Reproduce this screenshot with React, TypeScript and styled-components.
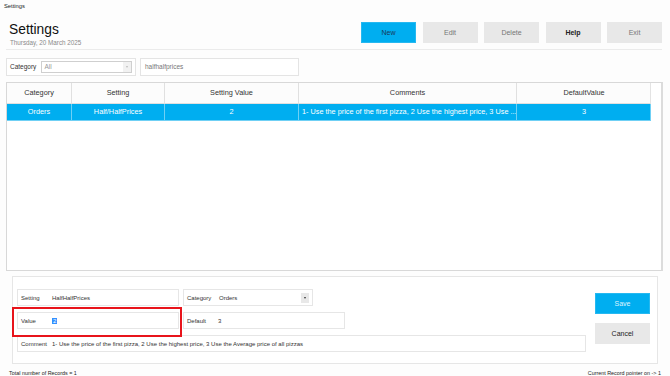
import React from "react";
import styled, { createGlobalStyle } from "styled-components";

const Global = createGlobalStyle`
  html, body { margin: 0; padding: 0; background: #fdfdfd; }
  body { font-family: "Liberation Sans", Arial, sans-serif; color: #333; }
  * { box-sizing: border-box; }
`;

const Page = styled.div`
  width: 670px;
  height: 376px;
  display: flex;
  flex-direction: column;
  background: #fdfdfd;
  overflow: hidden;
`;

const TitleBar = styled.div`
  height: 14px;
  padding: 3px 0 0 4px;
  font-size: 5.8px;
  color: #222;
`;

const Header = styled.div`
  display: flex;
  justify-content: space-between;
  align-items: flex-start;
  margin: 0 8px 0 6px;
  padding: 8px 0 2px 3px;
  border-bottom: 1px solid #ebebeb;
`;

const TitleBlock = styled.div`
  display: flex;
  flex-direction: column;
`;

const Title = styled.div`
  font-size: 13.8px;
  line-height: 16px;
  color: #111;
`;

const DateText = styled.div`
  font-size: 6.3px;
  line-height: 8px;
  color: #8a8a8a;
  margin-top: 1px;
  padding-left: 1px;
`;

const ButtonRow = styled.div`
  display: flex;
  gap: 6.5px;
`;

type Variant = "primary" | "plain" | "strong" | "save" | "cancel";

const isBlue = (v: Variant) => v === "primary" || v === "save";
const btnColor = (v: Variant) =>
  v === "primary" ? "#1a3a5a" : v === "save" ? "#dff4ff" : v === "strong" || v === "cancel" ? "#222" : "#777";

const ActionButton = styled.div<{ $v: Variant }>`
  width: 55px;
  height: 21px;
  display: flex;
  align-items: center;
  justify-content: center;
  font-size: 7px;
  background: ${(p) => (isBlue(p.$v) ? "#00aef0" : "#e8e8e8")};
  border: 1px solid ${(p) => (isBlue(p.$v) ? "#26b8f0" : "#e8e8e8")};
  color: ${(p) => btnColor(p.$v)};
  font-weight: ${(p) => (p.$v === "strong" ? 700 : 400)};
`;

const FilterRow = styled.div`
  display: flex;
  gap: 4px;
  margin: 8px 0 0 6px;
`;

const FilterBox = styled.div<{ $w: number }>`
  width: ${(p) => p.$w}px;
  height: 18px;
  border: 1px solid #e4e4e4;
  background: #fff;
  display: flex;
  align-items: center;
  padding: 0 3px;
  font-size: 6.5px;
  color: #333;
`;

const FilterLabel = styled.span`
  margin-right: 5px;
`;

const SelectBox = styled.div`
  flex: 1;
  height: 12px;
  border: 1px solid #cfcfcf;
  display: flex;
  align-items: center;
  justify-content: space-between;
  padding-left: 2px;
  color: #999;
  background: #fff;
`;

const SelectArrow = styled.div<{ $dark?: boolean }>`
  width: 8px;
  height: 10px;
  background: ${(p) => (p.$dark ? "#e8e8e8" : "#f1f1f1")};
  display: flex;
  align-items: center;
  justify-content: center;
  &::after {
    content: "";
    border-left: 1.5px solid transparent;
    border-right: 1.5px solid transparent;
    border-top: 2px solid ${(p) => (p.$dark ? "#333" : "#bbb")};
  }
`;

const SearchText = styled.span`
  color: #777;
  padding-left: 1px;
`;

const TableFrame = styled.div`
  margin: 6px 7px 0 6px;
  height: 190px;
  border: 1px solid #d8d8d8;
  border-right: 2px solid #dcdcdc;
  background: #fff;
  display: flex;
  flex-direction: column;
  padding: 0 10px 0 0;
`;

const Row = styled.div<{ $head?: boolean }>`
  display: grid;
  grid-template-columns: 64px 93px 134px 218px 135px;
  height: ${(p) => (p.$head ? "21px" : "17px")};
  background: ${(p) => (p.$head ? "#fcfcfc" : "#00aef0")};
  border-bottom: 1px solid ${(p) => (p.$head ? "#e0e0e0" : "#6fd0f5")};
  border-right: 1px solid ${(p) => (p.$head ? "#e3e3e3" : "#6fd0f5")};
`;

const Cell = styled.div<{ $head?: boolean; $left?: boolean; $first?: boolean }>`
  display: flex;
  align-items: center;
  justify-content: ${(p) => (p.$left ? "flex-start" : "center")};
  padding: 0 3px;
  font-size: 7.3px;
  white-space: nowrap;
  overflow: hidden;
  color: ${(p) => (p.$head ? "#333" : "#fff")};
  border-left: ${(p) => (p.$first ? "none" : `1px solid ${p.$head ? "#e0e0e0" : "#6fd0f5"}`)};
`;

const Panel = styled.div`
  position: relative;
  margin: 5px 12px 0 12px;
  height: 88px;
  border: 1px solid #e6e6e6;
  background: #fff;
  display: flex;
  justify-content: space-between;
  padding: 12px 7px 0 4px;
`;

const FormGrid = styled.div`
  display: grid;
  grid-template-columns: 162px 162px 237px;
  grid-template-rows: 17px 17px 17px;
  column-gap: 4px;
  row-gap: 6px;
`;

const Field = styled.div<{ $w?: number; $span?: number }>`
  grid-column: ${(p) => (p.$span ? `span ${p.$span}` : "auto")};
  width: ${(p) => (p.$w ? `${p.$w}px` : "auto")};
  border: 1px solid #e6e6e6;
  display: flex;
  align-items: center;
  padding: 0 3px;
  font-size: 6px;
  color: #333;
  white-space: nowrap;
`;

const FieldLabel = styled.span<{ $w: number }>`
  width: ${(p) => p.$w}px;
  flex-shrink: 0;
`;

const FieldSelect = styled.div`
  flex: 1;
  display: flex;
  align-items: center;
  justify-content: space-between;
`;

const Selected = styled.span`
  background: #3390ff;
  color: #fff;
  padding: 0 1px;
`;

const SideButtons = styled.div`
  display: flex;
  flex-direction: column;
  gap: 9px;
  padding-top: 4px;
`;

const Highlight = styled.div`
  position: absolute;
  left: -1px;
  top: 30px;
  width: 170px;
  height: 30px;
  border: 2px solid #e8141b;
  pointer-events: none;
`;

const Footer = styled.div`
  display: flex;
  justify-content: space-between;
  padding: 6px 9px 0 9px;
  font-size: 5.4px;
  color: #222;
`;

const heads = ["Category", "Setting", "Setting Value", "Comments", "DefaultValue"];
const data = [
  "Orders",
  "Half/HalfPrices",
  "2",
  "1- Use the price of the first pizza, 2 Use the highest price, 3 Use ...",
  "3",
];

export default function App() {
  return (
    <Page>
      <Global />
      <TitleBar>Settings</TitleBar>
      <Header>
        <TitleBlock>
          <Title>Settings</Title>
          <DateText>Thursday, 20 March 2025</DateText>
        </TitleBlock>
        <ButtonRow>
          <ActionButton $v="primary">New</ActionButton>
          <ActionButton $v="plain">Edit</ActionButton>
          <ActionButton $v="plain">Delete</ActionButton>
          <ActionButton $v="strong">Help</ActionButton>
          <ActionButton $v="plain">Exit</ActionButton>
        </ButtonRow>
      </Header>
      <FilterRow>
        <FilterBox $w={130}>
          <FilterLabel>Category</FilterLabel>
          <SelectBox>
            All
            <SelectArrow />
          </SelectBox>
        </FilterBox>
        <FilterBox $w={159}>
          <SearchText>halfhalfprices</SearchText>
        </FilterBox>
      </FilterRow>
      <TableFrame>
        <Row $head>
          {heads.map((r, i) => (
            <Cell key={r} $head $first={i === 0}>
              {r}
            </Cell>
          ))}
        </Row>
        <Row>
          {data.map((d, i) => (
            <Cell key={i} $first={i === 0} $left={i === 3}>
              {d}
            </Cell>
          ))}
        </Row>
      </TableFrame>
      <Panel>
        <FormGrid>
          <Field>
            <FieldLabel $w={31}>Setting</FieldLabel>
            HalfHalfPrices
          </Field>
          <Field $w={130}>
            <FieldLabel $w={32}>Category</FieldLabel>
            <FieldSelect>
              Orders
              <SelectArrow $dark />
            </FieldSelect>
          </Field>
          <div />
          <Field>
            <FieldLabel $w={31}>Value</FieldLabel>
            <Selected>2</Selected>
          </Field>
          <Field>
            <FieldLabel $w={31}>Default</FieldLabel>
            3
          </Field>
          <div />
          <Field $span={3}>
            <FieldLabel $w={31}>Comment</FieldLabel>
            1- Use the price of the first pizza, 2 Use the highest price, 3 Use the Average price of all pizzas
          </Field>
        </FormGrid>
        <SideButtons>
          <ActionButton $v="save">Save</ActionButton>
          <ActionButton $v="cancel">Cancel</ActionButton>
        </SideButtons>
        <Highlight />
      </Panel>
      <Footer>
        <span>Total number of Records = 1</span>
        <span>Current Record pointer on -&gt; 1</span>
      </Footer>
    </Page>
  );
}
